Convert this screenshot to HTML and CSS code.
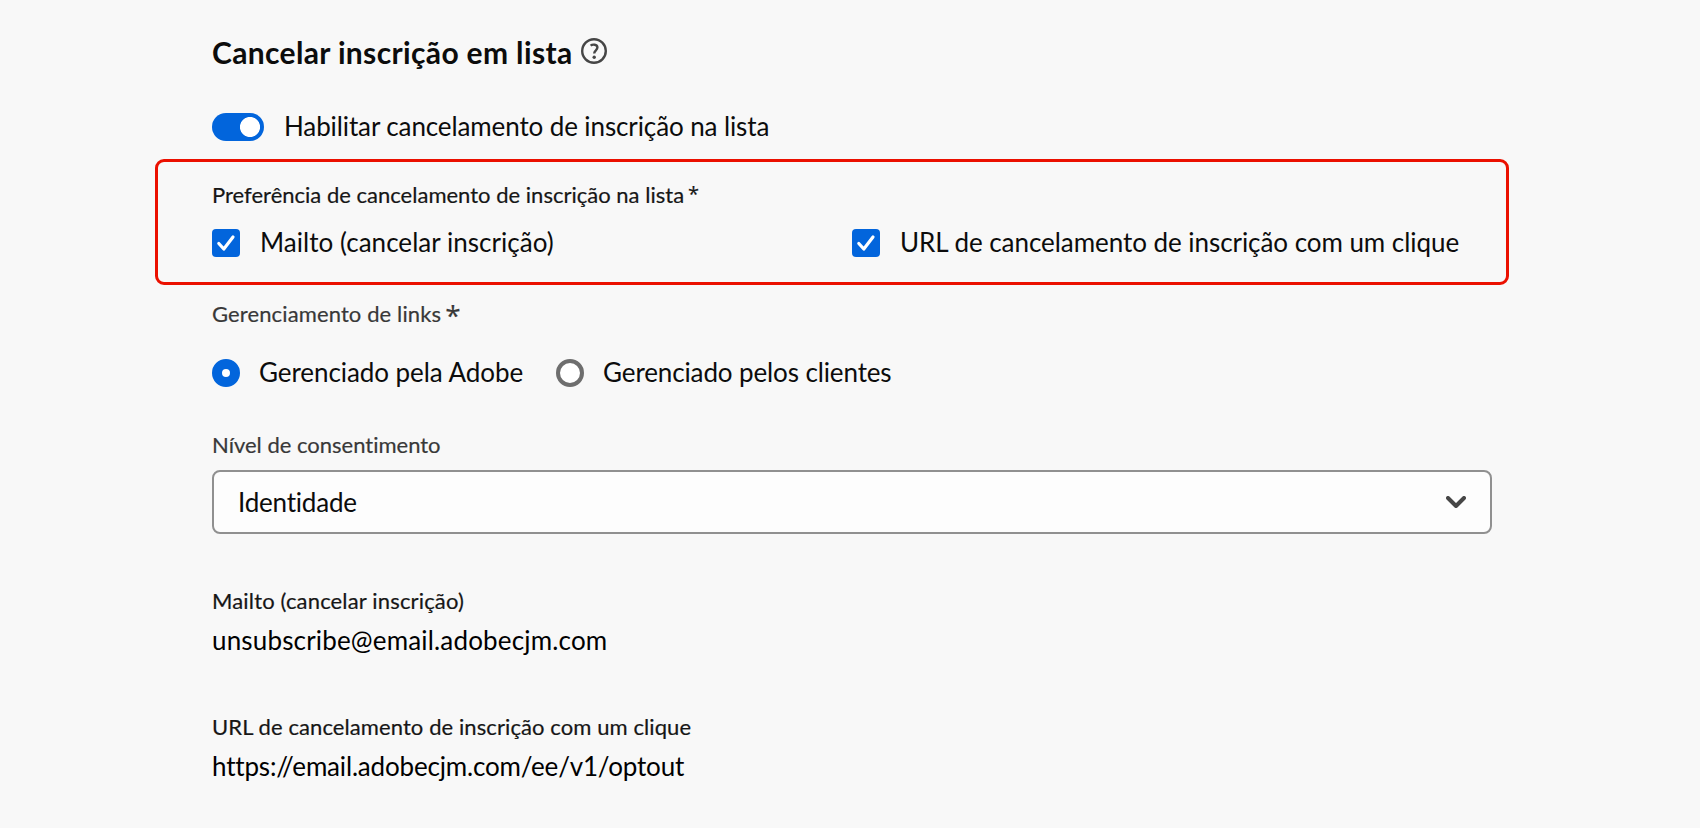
FILE: index.html
```html
<!DOCTYPE html>
<html lang="pt">
<head>
<meta charset="utf-8">
<title>Cancelar inscrição em lista</title>
<link rel="stylesheet" href="styles.css">
</head>
<body>
<main class="panel">
  <h1 class="title"><span class="t t-title">Cancelar inscrição em lista</span>
    <svg class="help" viewBox="0 0 26 26"><circle cx="13" cy="13" r="11.8"/><path d="M9.6 7.6C11.4 6.2 16.4 6.1 16.4 9.6C16.4 12.2 13.2 12.4 13.2 15.4"/><circle class="dot" cx="13.2" cy="19.3" r="1.7"/></svg>
  </h1>
  <div class="row toggle-row"><span class="switch"></span><span class="t t-toggle">Habilitar cancelamento de inscrição na lista</span></div>
  <section class="highlight">
    <div class="label"><span class="t t-pref">Preferência de cancelamento de inscrição na lista</span><span class="star star-small">*</span></div>
    <div class="checks">
      <div class="row"><svg class="box" viewBox="0 0 28 28"><rect width="28" height="28" rx="4"/><path d="M6.8 14.5L11.8 20L21 8"/></svg><span class="t t-mailto">Mailto (cancelar inscrição)</span></div>
      <div class="row"><svg class="box" viewBox="0 0 28 28"><rect width="28" height="28" rx="4"/><path d="M6.8 14.5L11.8 20L21 8"/></svg><span class="t t-url">URL de cancelamento de inscrição com um clique</span></div>
    </div>
  </section>
  <div class="label muted links"><span class="t t-links">Gerenciamento de links</span><span class="star star-big">*</span></div>
  <div class="row radios"><span class="radio on"></span><span class="t t-adobe">Gerenciado pela Adobe</span><span class="radio second"></span><span class="t t-clients">Gerenciado pelos clientes</span></div>
  <div class="label muted level"><span class="t t-level">Nível de consentimento</span></div>
  <div class="select"><span class="t t-ident">Identidade</span><svg class="chevron" viewBox="0 0 20 12"><path d="M2 2L10 10L18 2"/></svg></div>
  <div class="label"><span class="t t-mlabel">Mailto (cancelar inscrição)</span></div>
  <div class="value"><span class="t t-email">unsubscribe@email.adobecjm.com</span></div>
  <div class="label second-label"><span class="t t-ulabel">URL de cancelamento de inscrição com um clique</span></div>
  <div class="value"><span class="t t-https">https://email.adobecjm.com/ee/v1/optout</span></div>
</main>
</body>
</html>
```
FILE: styles.css
```css
* { box-sizing: border-box; }
body { margin: 0; background: #f8f8f8; color: #0c0c0c; font: 26px/34px Lato, "Open Sans", sans-serif; font-variant-ligatures: none; }
.panel { width: 1354px; height: 828px; margin-left: 155px; padding: 31px 17px 0 57px; }
.t { white-space: nowrap; flex: none; }
.row { display: flex; align-items: center; height: 34px; }
.title { display: flex; gap: 8px; height: 40px; margin: 0; font-size: 30px; line-height: 42px; font-weight: 700; }
.t-title { letter-spacing: 0.35px; }
.help { width: 26px; height: 26px; margin-top: 7px; fill: none; stroke: #464646; stroke-width: 2.4; }
.help .dot { fill: #464646; stroke: none; }
.toggle-row { margin-top: 39px; gap: 20px; }
.switch { width: 52px; height: 28px; border-radius: 14px; background: radial-gradient(circle at 38px 14px, #fff 9.6px, #0265dc 10.4px); }
.row .t { padding-bottom: 2px; }
.t-toggle { letter-spacing: -0.11px; }
.t-pref { letter-spacing: 0.01px; }
.t-mailto { letter-spacing: 0.04px; }
.t-url { letter-spacing: -0.05px; }
.t-links { letter-spacing: 0.12px; }
.t-adobe { letter-spacing: -0.06px; }
.t-clients { letter-spacing: -0.12px; }
.t-ident { letter-spacing: -0.2px; }
.t-mlabel { letter-spacing: 0.16px; }
.t-email { letter-spacing: 0.17px; }
.t-ulabel { letter-spacing: 0.09px; }
.t-https { letter-spacing: -0.18px; }
.highlight { width: 1354px; height: 126px; margin: 15px 0 0 -57px; padding: 17px 0 0 54px; border: 3px solid #eb1000; border-radius: 9px; }
.label { display: flex; height: 32px; line-height: 32px; font-size: 22px; color: #161616; -webkit-text-stroke: 0.2px currentColor; }
.muted { color: #383838; }
.star { font-family: "Open Sans", sans-serif; }
.star-small { margin-left: 4px; font-size: 20px; line-height: 30px; }
.star-big { margin-left: 4px; font-size: 28px; line-height: 34px; }
.checks { display: grid; grid-template-columns: 640px 1fr; margin-top: 15px; }
.checks .row { gap: 20px; }
.box { width: 28px; height: 28px; fill: #0265dc; }
.box path { fill: none; stroke: #fff; stroke-width: 3.2; stroke-linecap: round; stroke-linejoin: round; }
.links { margin-top: 13px; }
.radios { margin-top: 26px; }
.radio { width: 28px; height: 28px; margin-right: 19px; border: 4px solid #6e6e6e; border-radius: 50%; background: #fff; }
.radio.on { border: 10px solid #0265dc; }
.radio.second { margin-left: 33px; }
.level { margin-top: 39px; }
.select { display: flex; align-items: center; justify-content: space-between; height: 64px; margin: 9px 0 51px; padding: 0 24px; border: 2px solid #909090; border-radius: 8px; background: #fdfdfd; }
.chevron { width: 20px; height: 12px; fill: none; stroke: #464646; stroke-width: 4; stroke-linecap: round; stroke-linejoin: round; }
.value { height: 34px; margin-top: 6px; color: #000; }
.second-label { margin-top: 54px; }
```
